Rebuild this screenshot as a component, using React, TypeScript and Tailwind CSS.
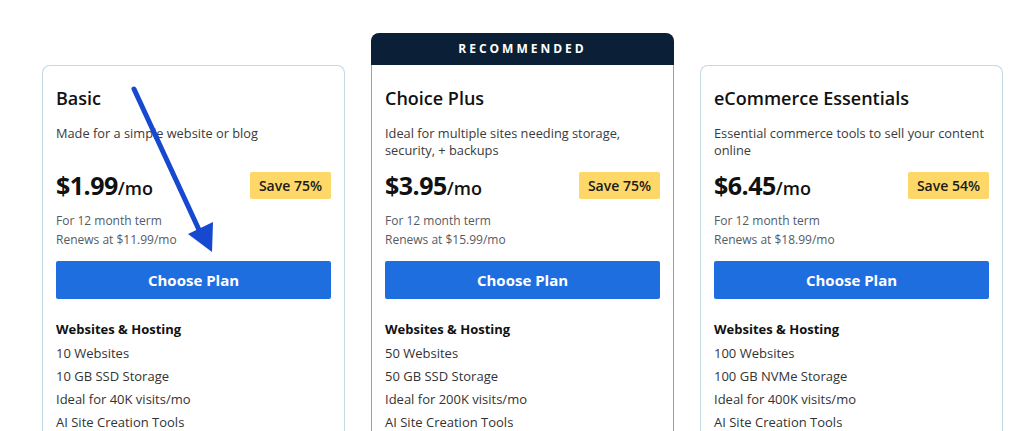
import React from "react";

type Plan = {
  name: string;
  desc: string;
  price: string;
  save: string;
  renews: string;
  items: string[];
  recommended?: boolean;
};

const plans: Plan[] = [
  {
    name: "Basic",
    desc: "Made for a simple website or blog",
    price: "$1.99",
    save: "Save 75%",
    renews: "Renews at $11.99/mo",
    items: ["10 Websites", "10 GB SSD Storage", "Ideal for 40K visits/mo", "AI Site Creation Tools"],
  },
  {
    name: "Choice Plus",
    desc: "Ideal for multiple sites needing storage, security, + backups",
    price: "$3.95",
    save: "Save 75%",
    renews: "Renews at $15.99/mo",
    items: ["50 Websites", "50 GB SSD Storage", "Ideal for 200K visits/mo", "AI Site Creation Tools"],
    recommended: true,
  },
  {
    name: "eCommerce Essentials",
    desc: "Essential commerce tools to sell your content online",
    price: "$6.45",
    save: "Save 54%",
    renews: "Renews at $18.99/mo",
    items: ["100 Websites", "100 GB NVMe Storage", "Ideal for 400K visits/mo", "AI Site Creation Tools"],
  },
];

function Card({ plan }: { plan: Plan }) {
  const body = (
    <div className="px-[13px] pt-[20px] pb-6">
      <div className="text-[18px] leading-[24px] font-semibold text-[#111111]">{plan.name}</div>
      <div className="mt-[15px] min-h-[34px] text-[12.8px] leading-[17px] text-[#3a3a3a]">{plan.desc}</div>
      <div className="mt-[13px] flex h-[27px] items-center justify-between">
        <div className="flex items-baseline text-[#111111]">
          <span className="text-[25px] font-bold tracking-[-0.5px]">{plan.price}</span>
          <span className="text-[18px] font-semibold">/mo</span>
        </div>
        <div className="flex h-[27px] items-center rounded-[2px] bg-[#fdd868] px-[9px] text-[14px] font-semibold text-[#1a1a1a]">
          {plan.save}
        </div>
      </div>
      <div className="mt-[12px] text-[12px] leading-[19px] text-[#555b63]">
        <div>For 12 month term</div>
        <div>{plan.renews}</div>
      </div>
      <button className="mt-[12px] flex h-[38px] w-full items-center justify-center rounded-[2px] bg-[#1f6ee0] text-[15px] font-bold text-white">
        Choose Plan
      </button>
      <div className="mt-[20px] text-[13px] leading-[20px] font-bold text-[#111111]">Websites &amp; Hosting</div>
      <ul className="mt-[3px] text-[13px] leading-[23px] text-[#333333]">
        {plan.items.map((it) => (
          <li key={it}>{it}</li>
        ))}
      </ul>
    </div>
  );

  if (plan.recommended) {
    return (
      <div className="w-[303px] shrink-0">
        <div className="flex h-[32px] items-center justify-center rounded-t-[8px] bg-[#0b1f36] text-[12px] font-bold tracking-[3px] text-white">
          RECOMMENDED
        </div>
        <div className="border-x border-[#9aa0a6] bg-white pt-px">{body}</div>
      </div>
    );
  }
  return (
    <div className="mt-[32px] w-[303px] shrink-0 rounded-t-[8px] border border-b-0 border-[#c3d9e3] bg-white">
      {body}
    </div>
  );
}

export default function App() {
  return (
    <div
      className="relative h-[431px] w-[1024px] overflow-hidden bg-white"
      style={{ fontFamily: '"Open Sans", "Liberation Sans", sans-serif' }}
    >
      <div className="flex gap-[26px] pl-[42px] pt-[33px]">
        {plans.map((p) => (
          <Card key={p.name} plan={p} />
        ))}
      </div>
      <svg className="pointer-events-none absolute left-0 top-0" width="1024" height="431" viewBox="0 0 1024 431">
        <line x1="134" y1="89" x2="200" y2="232" stroke="#1748d0" strokeWidth="5" strokeLinecap="round" />
        <polygon points="188,234 213,222 212,252" fill="#1748d0" />
      </svg>
    </div>
  );
}
